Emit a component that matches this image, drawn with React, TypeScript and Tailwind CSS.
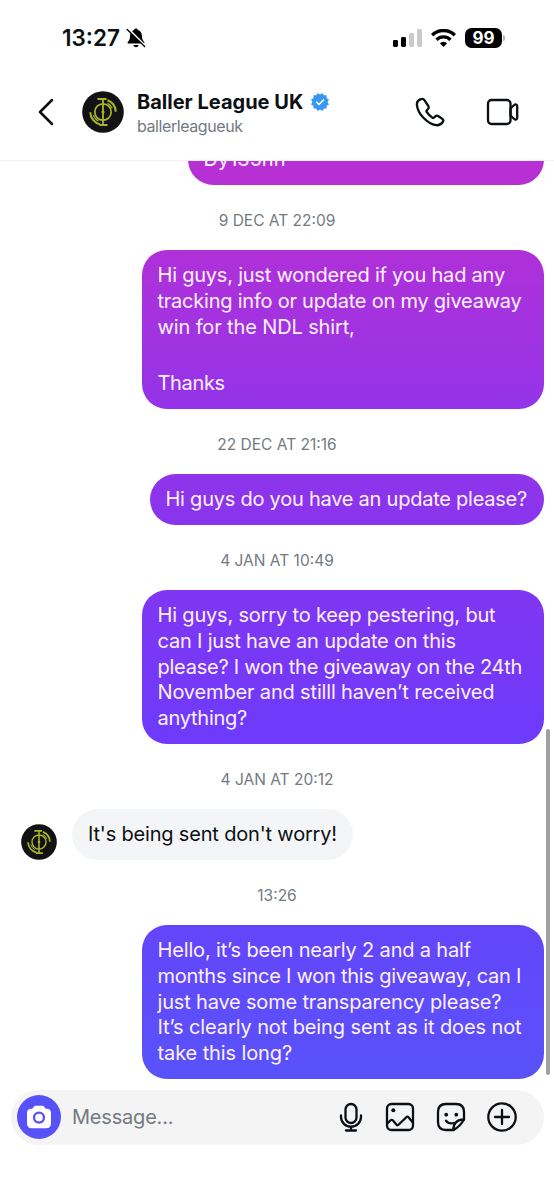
import React from 'react';

interface Line {
  text: string;
  tracking: string;
}

interface Message {
  id: number;
  time: string;
  incoming?: boolean;
  lines: Line[];
  bubble: string;
}

const messages: Message[] = [
  {
    id: 1,
    time: '9 DEC AT 22:09',
    lines: [
      { text: 'Hi guys, just wondered if you had any', tracking: 'tracking-[-0.22px]' },
      { text: 'tracking info or update on my giveaway', tracking: 'tracking-[-0.23px]' },
      { text: 'win for the NDL shirt,', tracking: 'tracking-[-0.13px]' },
      { text: '', tracking: '' },
      { text: 'Thanks', tracking: 'tracking-[-0.35px]' },
    ],
    bubble: 'w-[402px] h-[159px] rounded-[25px] bg-linear-to-b from-[#b030d9] to-[#9333e8]',
  },
  {
    id: 2,
    time: '22 DEC AT 21:16',
    lines: [{ text: 'Hi guys do you have an update please?', tracking: 'tracking-[-0.24px]' }],
    bubble: 'w-[394px] h-[51px] rounded-[25.5px] bg-linear-to-b from-[#8f34ea] to-[#8835ee]',
  },
  {
    id: 3,
    time: '4 JAN AT 10:49',
    lines: [
      { text: 'Hi guys, sorry to keep pestering, but', tracking: 'tracking-[-0.18px]' },
      { text: 'can I just have an update on this', tracking: 'tracking-[-0.19px]' },
      { text: 'please? I won the giveaway on the 24th', tracking: 'tracking-[-0.24px]' },
      { text: 'November and stilll haven’t received', tracking: 'tracking-[-0.16px]' },
      { text: 'anything?', tracking: 'tracking-[-0.25px]' },
    ],
    bubble: 'w-[402px] h-[154px] rounded-[25px] bg-linear-to-b from-[#8036f2] to-[#6d3afb]',
  },
  {
    id: 4,
    time: '4 JAN AT 20:12',
    incoming: true,
    lines: [{ text: "It's being sent don't worry!", tracking: 'tracking-[-0.18px]' }],
    bubble: 'w-[281px] h-[51px] rounded-[25.5px] bg-[#f3f5f7]',
  },
  {
    id: 5,
    time: '13:26',
    lines: [
      { text: 'Hello, it’s been nearly 2 and a half', tracking: 'tracking-[-0.16px]' },
      { text: 'months since I won this giveaway, can I', tracking: 'tracking-[-0.25px]' },
      { text: 'just have some transparency please?', tracking: 'tracking-[-0.18px]' },
      { text: 'It’s clearly not being sent as it does not', tracking: 'tracking-[-0.11px]' },
      { text: 'take this long?', tracking: 'tracking-[-0.11px]' },
    ],
    bubble: 'w-[402px] h-[154px] rounded-[25px] bg-linear-to-b from-[#6445fa] to-[#5852fa]',
  },
];

const Avatar: React.FC<{ className: string }> = ({ className }) => (
  <svg viewBox="0 0 42 42" className={className} fill="none">
    <circle cx="21" cy="21" r="20.8" fill="#121214" />
    <g stroke="#a9b52a" strokeWidth="1.7">
      <circle cx="21" cy="21" r="8.2" />
      <path d="M21 8.5v25" strokeWidth="1.8" />
      <path d="M15.5 8h9M17.500 34h8" strokeWidth="2" />
      <path d="M25.500 9.200a12.700 12.700 0 0 1 8.200 11.600" strokeWidth="2" />
      <path d="M25.500 12.300a10 10 0 0 1 4.700 5" strokeWidth="1.100" />
      <path d="M8.300 21.200a12.700 12.700 0 0 0 9.700 12.200" strokeWidth="2" />
      <path d="M11.400 24a10 10 0 0 0 5 6" strokeWidth="1.100" />
    </g>
    <circle cx="21" cy="21" r="1.600" fill="#a9b52a" />
  </svg>
);

const StatusBar: React.FC = () => (
  <div className="flex items-center h-[64px] pt-[11px] pl-[62px] pr-[49px]">
    <span className="w-[62px] text-[22.5px] leading-[26px] font-semibold whitespace-nowrap">13:27</span>
    <svg viewBox="0 0 20 20" className="w-[20px] h-[20px] ml-[2px]">
      <path d="M10 .6c1 0 1.700.6 1.900 1.400 2.500.8 3.900 2.900 4 5.600.1 3.400.8 5 2.300 6.400.4.4.3 1.600-.6 1.600H2.400c-.9 0-1-1.200-.6-1.600C3.300 12.600 4 11 4.100 7.600c.1-2.700 1.500-4.800 4-5.600C8.300 1.200 9 .6 10 .6z" fill="#000" />
      <path d="M7.300 17h5.400c-.3 1.400-1.400 2.200-2.700 2.200S7.600 18.400 7.300 17z" fill="#000" />
      <path d="M2.600 1.300 19 17.700" stroke="#fff" strokeWidth="2.200" />
      <path d="M1.200 1.400 18.600 18.600" stroke="#000" strokeWidth="1.400" strokeLinecap="round" />
    </svg>
    <div className="flex items-center ml-auto">
      <svg viewBox="0 0 29 18" className="w-[29px] h-[18px]">
        <rect x="0" y="11" width="5" height="7" rx="1.4" fill="#000" />
        <rect x="8" y="8" width="5" height="10" rx="1.4" fill="#000" />
        <rect x="16" y="4" width="5" height="14" rx="1.4" fill="#cacaca" />
        <rect x="24" y="0" width="5" height="18" rx="1.4" fill="#cacaca" />
      </svg>
      <svg viewBox="0 0 25 18" className="w-[25px] h-[18px] ml-[9px]" fill="none" stroke="#000" strokeWidth="3.4">
        <path d="M1.200 6.200a16 16 0 0 1 22.600 0" />
        <path d="M5.500 10.700a10 10 0 0 1 14 0" />
        <path d="M12.500 18l-3.700-3.700a5.300 5.300 0 0 1 7.400 0z" fill="#000" stroke="none" />
      </svg>
      <div className="flex items-center justify-center w-[37px] h-[20px] ml-[9px] rounded-[6.5px] bg-black text-white text-[17px] leading-[20px] font-bold">
        99
      </div>
      <div className="w-[2px] h-[6px] ml-[1px] rounded-r-full bg-[#b5b5b5]" />
    </div>
  </div>
);

const Header: React.FC = () => (
  <header className="flex h-[97px] pt-[27px] border-b border-[#f0f0f2]">
    <svg viewBox="0 0 16 28" className="w-[16px] h-[28px] mt-[7px] ml-[38px]" fill="none" stroke="#0c1014" strokeWidth="2.5" strokeLinecap="round" strokeLinejoin="round">
      <path d="M14 2 2 14l12 12" />
    </svg>
    <Avatar className="w-[42px] h-[42px] ml-[28px]" />
    <div className="ml-[13px] w-[200px]">
      <div className="flex items-center h-[24px] -mt-px">
        <span className="w-[169px] text-[20px] leading-[24px] font-bold whitespace-nowrap">Baller League UK</span>
        <svg viewBox="0 0 40 40" className="w-[18px] h-[18px] ml-[5px]">
          <path
            d="M19.998 3.094 14.638 0l-2.972 5.150H5.432v6.354L0 14.640 3.094 20 0 25.359l5.432 3.137v5.905h5.975L14.638 40l5.360-3.094L25.358 40l3.232-5.600h6.162v-6.010L40 25.359 36.905 20 40 14.641l-5.248-3.030v-6.460h-6.419L25.358 0l-5.360 3.094Z"
            fill="#3897f0"
          />
          <path d="m12.500 20.500 5.200 5L27.800 15.500" fill="none" stroke="#fff" strokeWidth="3.6" strokeLinecap="round" />
        </svg>
      </div>
      <div className="text-[16px] leading-[20px] mt-[2px] tracking-[-0.42px] text-[#737a82] whitespace-nowrap">ballerleagueuk</div>
    </div>
    <svg viewBox="0 0 30 30" className="w-[30px] h-[30px] mt-[6px] ml-[78px]" fill="none" stroke="#0c1014" strokeWidth="2.3" strokeLinejoin="round">
      <path d="M5.200 2.400C3 3.400 1.700 5.200 1.900 7.800c.4 4.600 3.100 9.300 6.300 12.700 3.500 3.700 8.300 7 12.900 7.700 2.900.4 5-.9 6.700-3.200.8-1.100.5-2.300-.5-3.100l-3.800-2.700c-1-.7-2.300-.6-3.200.2l-1.400 1.200c-.5.4-1.100.4-1.600 0-2.200-1.500-4.200-3.500-5.600-5.700-.4-.6-.3-1.200.2-1.700l1.100-1.200c.8-.9.9-2 .3-3L9.600 3.400C8.600 1.800 6.800 1.600 5.200 2.400z" />
    </svg>
    <svg viewBox="0 0 33 28" className="w-[33px] h-[28px] mt-[7px] ml-[41px]" fill="none" stroke="#0c1014" strokeWidth="2.3" strokeLinejoin="round">
      <rect x="2" y="2" width="22.5" height="24" rx="3.5" />
      <path d="M24.500 10.500 28.200 7c1.200-1.100 3-.4 3 1.200v11.600c0 1.600-1.800 2.300-3 1.200l-3.700-3.500z" />
    </svg>
  </header>
);

const Bubble: React.FC<{ message: Message }> = ({ message }) => (
  <div className={`${message.bubble} ${message.incoming ? 'text-[#0c1014]' : 'text-[#fdf1ff]'} pl-[16px] pt-[13px]`}>
    {message.lines.map((line, i) => (
      <div
        key={i}
        className={`text-[20px] whitespace-nowrap ${line.tracking} ${line.text ? 'h-[25.75px] leading-[25.75px]' : 'h-[31px]'}`}
      >
        {line.text}
      </div>
    ))}
  </div>
);

const Composer: React.FC = () => (
  <div className="flex items-center w-[532.5px] h-[55.5px] ml-[11px] pl-[6px] pr-[26px] rounded-full bg-[#f4f4f5]">
    <div className="flex items-center justify-center w-[44px] h-[44px] rounded-full bg-[#5751f8]">
      <svg viewBox="0 0 24 24" className="w-[24px] h-[24px]">
        <path d="M9 .8h6c1.400 0 2.200.7 2.700 1.600.4.9 1 1.300 2 1.300 2.600 0 4.300 1.400 4.300 4v10.800c0 3-1.700 4.700-4.700 4.700H4.700C1.700 23.200 0 21.500 0 18.500V7.700c0-2.600 1.700-4 4.300-4 1 0 1.600-.4 2-1.300C6.800 1.500 7.600.8 9 .8z" fill="#fff" />
        <circle cx="12" cy="12.6" r="5" fill="none" stroke="#5751f8" strokeWidth="2.3" />
      </svg>
    </div>
    <span className="ml-[11px] text-[20px] leading-[26px] tracking-[-0.2px] text-[#737a82]">Message...</span>
    <div className="flex items-center ml-auto text-[#0c1014]">
      <svg viewBox="0 0 24 30" className="w-[24px] h-[30px]" fill="none" stroke="currentColor" strokeWidth="2.3" strokeLinecap="round">
        <rect x="6.5" y="2" width="11" height="19" rx="5.5" />
        <path d="M2 13.500v1.500a10 9.700 0 0 0 20 0v-1.500M12 25v3.500M7 28.500h10" />
      </svg>
      <svg viewBox="0 0 30 30" className="w-[30px] h-[30px] ml-[22px]" fill="none" stroke="currentColor" strokeWidth="2.3" strokeLinejoin="round">
        <rect x="2" y="2" width="26" height="26" rx="4.5" />
        <circle cx="8.3" cy="8.3" r="2" fill="currentColor" stroke="none" />
        <path d="M2 21.800l3.600-3.500c.7-.7 1.500-.7 2.200 0l3.800 4.400c.6.7 1.300.7 1.900.1l7.800-7.600c.7-.7 1.500-.7 2.200 0l4.500 5.600" />
      </svg>
      <svg viewBox="0 0 30 30" className="w-[30px] h-[30px] ml-[21px]" fill="none" stroke="currentColor" strokeWidth="2.3" strokeLinejoin="round" strokeLinecap="round">
        <path d="M17.500 28H10c-5 0-8-3-8-8V10c0-5 3-8 8-8h10c5 0 8 3 8 8v7.500c-2.500 4.500-6 8-10.500 10.500z" />
        <path d="M17.500 28c-.5-6.500 3.500-10.500 10.500-10.500" />
        <path d="M10 18.700c1.500 2.200 4.500 3.300 8 2.300" />
        <circle cx="10.2" cy="12.700" r="1.9" fill="currentColor" stroke="none" />
        <circle cx="20.3" cy="12.700" r="1.9" fill="currentColor" stroke="none" />
      </svg>
      <svg viewBox="0 0 32 32" className="w-[32px] h-[32px] ml-[20px]" fill="none" stroke="currentColor" strokeWidth="2.3" strokeLinecap="round">
        <circle cx="16" cy="16" r="13.7" />
        <path d="M16 9v14M9 16h14" />
      </svg>
    </div>
  </div>
);

const App: React.FC = () => {
  return (
    <div className="relative w-[554px] h-[1200px] overflow-hidden bg-white text-[#0c1014] font-['Inter','Liberation_Sans',sans-serif]">
      <StatusBar />
      <Header />
      <main className="h-[928.5px] overflow-hidden">
        {/* tail of an earlier message, scrolled under the header */}
        <div className="h-[24px] overflow-hidden flex flex-col items-end justify-end pr-[10.5px]">
          <div className="w-[356px] h-[51px] shrink-0 rounded-[25.5px] pl-[16px] pt-[13px] bg-[#b730d4] text-[#fdf1ff] text-[20px] leading-[25.75px]">
            Dy135nn
          </div>
        </div>
        {messages.map((message) => (
          <div key={message.id}>
            <div className="h-[65px] pt-[7px] flex items-center justify-center text-[15.5px] text-[#737a82]">
              {message.time}
            </div>
            {message.incoming ? (
              <div className="flex items-end pl-[21px]">
                <Avatar className="w-[36px] h-[36px] mr-[15px]" />
                <Bubble message={message} />
              </div>
            ) : (
              <div className="flex justify-end pr-[10.5px]">
                <Bubble message={message} />
              </div>
            )}
          </div>
        ))}
      </main>
      <Composer />
      {/* scroll thumb */}
      <div className="absolute right-[4px] top-[729px] w-[4px] h-[346px] rounded-full bg-[#a0a0a2]" />
    </div>
  );
};

export default App;
